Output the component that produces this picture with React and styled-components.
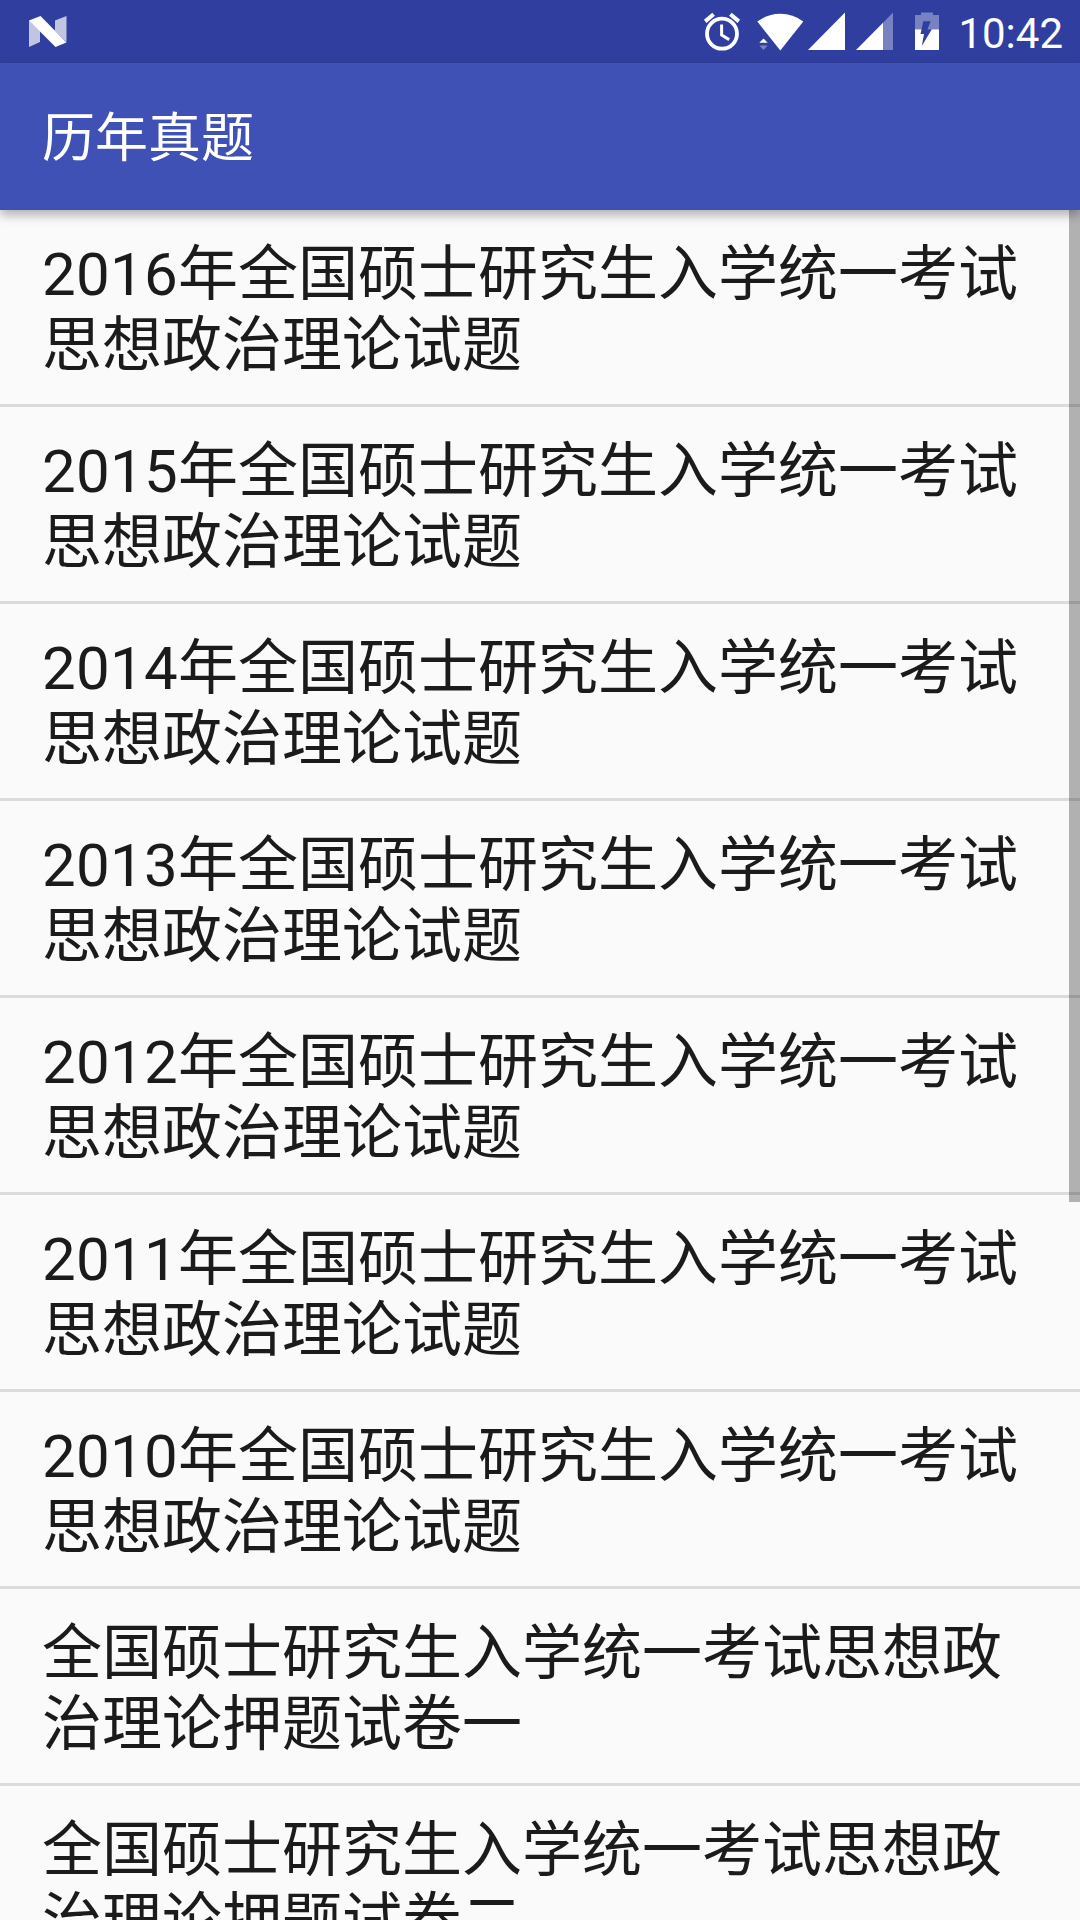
import React from 'react';
import styled, { createGlobalStyle } from 'styled-components';

const GlobalStyle = createGlobalStyle`
  body {
    margin: 0;
    background-color: #fafafa;
    font-family: Roboto, 'Noto Sans CJK SC', sans-serif;
  }
`;

const Screen = styled.div`
  display: flex;
  flex-direction: column;
  width: 1080px;
  height: 1920px;
  overflow: hidden;
  background-color: #fafafa;
`;

const StatusBar = styled.div`
  display: flex;
  flex-shrink: 0;
  align-items: center;
  justify-content: space-between;
  height: 63px;
  padding: 0 17px 0 28px;
  background-color: #303f9f;
`;

const StatusIcons = styled.div`
  display: flex;
  align-items: center;
`;

const Icon = styled.svg`
  display: block;
  flex-shrink: 0;
  height: 63px;
  width: ${(props) => props.$width}px;
  margin-right: ${(props) => props.$gap || 0}px;
  fill: #fff;
`;

const Clock = styled.span`
  color: #fff;
  font-size: 42px;
  line-height: 63px;
  padding-top: 3px;
`;

const AppBar = styled.header`
  position: relative;
  z-index: 1;
  display: flex;
  flex-shrink: 0;
  align-items: center;
  box-sizing: border-box;
  height: 147px;
  padding: 4px 42px 0;
  background-color: #3f51b5;
  box-shadow: 0 5px 10px rgba(0, 0, 0, 0.3);
`;

const Title = styled.h1`
  margin: 0;
  color: #fff;
  font-size: 53px;
  font-weight: 400;
  line-height: 72px;
`;

const ListArea = styled.main`
  position: relative;
  flex: 1;
  min-height: 0;
`;

const List = styled.ul`
  height: 100%;
  margin: 0;
  padding: 0;
  overflow: hidden;
  list-style: none;
`;

const Item = styled.li`
  padding: 29px 42px 23px;
  border-bottom: 3px solid #dbdbdb;
  color: #1b1b1b;
  font-size: 60px;
  line-height: 71px;
`;

const Year = styled.span`
  letter-spacing: 0.3px;
`;

const ScrollThumb = styled.div`
  position: absolute;
  z-index: 2;
  top: 0;
  right: 0;
  width: 11px;
  height: 992px;
  background-color: rgba(0, 0, 0, 0.29);
`;

const papers = [
  { year: 2016, title: '年全国硕士研究生入学统一考试思想政治理论试题' },
  { year: 2015, title: '年全国硕士研究生入学统一考试思想政治理论试题' },
  { year: 2014, title: '年全国硕士研究生入学统一考试思想政治理论试题' },
  { year: 2013, title: '年全国硕士研究生入学统一考试思想政治理论试题' },
  { year: 2012, title: '年全国硕士研究生入学统一考试思想政治理论试题' },
  { year: 2011, title: '年全国硕士研究生入学统一考试思想政治理论试题' },
  { year: 2010, title: '年全国硕士研究生入学统一考试思想政治理论试题' },
  { title: '全国硕士研究生入学统一考试思想政治理论押题试卷一' },
  { title: '全国硕士研究生入学统一考试思想政治理论押题试卷二' },
];

const NougatIcon = () => (
  <Icon $width={40} viewBox="0 0 40 63">
    <path d="M1 20L12 31V42L1 47Z" opacity="0.7" />
    <path d="M27 20.5L38.5 16V42L27 31Z" opacity="0.7" />
    <path d="M1 20.5L12.5 16L38.5 42.5L27.5 47Z" />
  </Icon>
);

const AlarmIcon = () => (
  <Icon $width={38} $gap={15} viewBox="0 0 38 63">
    <g fill="none" stroke="#fff">
      <circle cx="19" cy="33.7" r="15" strokeWidth="3.8" />
      <path d="M2.2 21.4L10.6 14.3M27.4 14.3L35.8 21.4" strokeWidth="4" />
      <path d="M18.6 24.5V35L26.2 39.6" strokeWidth="3" />
    </g>
  </Icon>
);

const WifiIcon = () => (
  <Icon $width={48} $gap={4} viewBox="0 0 48 63">
    <path d="M1.3 21.6Q11.5 13.8 24.3 13.8T47.3 21.6L24.3 50.5Z" />
    <path d="M3.3 42.8L7.5 38.4L11.7 42.8Z" />
    <path d="M3.3 45.6H11.7L7.5 50Z" opacity="0.35" />
  </Icon>
);

const SignalIcon = () => (
  <Icon $width={37} $gap={11} viewBox="0 0 37 63">
    <path d="M0 50L37 12.6V50Z" />
  </Icon>
);

const WeakSignalIcon = () => (
  <Icon $width={37} $gap={22} viewBox="0 0 37 63">
    <path d="M0 50L27 22.7V50Z" />
    <path d="M27 22.7L37 12.6V50H27Z" opacity="0.35" />
  </Icon>
);

const BatteryIcon = () => (
  <Icon $width={24} $gap={19} viewBox="0 0 24 63">
    <path d="M0 15H6V12.4H18V15H24V29.3H0Z" opacity="0.35" />
    <path d="M0 29.3H24V50H0Z" />
    <path d="M8.3 21.3H15.6L12.5 29.2H16.8L6.8 46L9 34H5.5Z" fill="#303f9f" />
  </Icon>
);

const App = () => {
  return (
    <>
      <GlobalStyle />
      <Screen>
        <StatusBar>
          <NougatIcon />
          <StatusIcons>
            <AlarmIcon />
            <WifiIcon />
            <SignalIcon />
            <WeakSignalIcon />
            <BatteryIcon />
            <Clock>10:42</Clock>
          </StatusIcons>
        </StatusBar>
        <AppBar>
          <Title>历年真题</Title>
        </AppBar>
        <ListArea>
          <List>
            {papers.map(({ year, title }) => (
              <Item key={year || title}>
                {year && <Year>{year}</Year>}
                {title}
              </Item>
            ))}
          </List>
          <ScrollThumb />
        </ListArea>
      </Screen>
    </>
  );
};

export default App;
